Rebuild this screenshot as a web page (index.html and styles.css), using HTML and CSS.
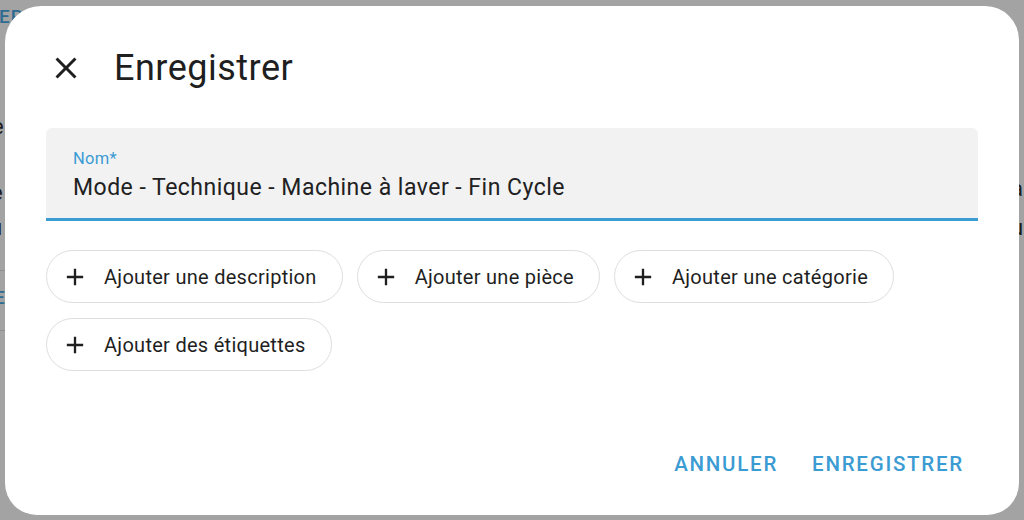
FILE: index.html
```html
<!DOCTYPE html>
<html lang="fr">
<head>
<meta charset="utf-8">
<title>Enregistrer</title>
<link rel="stylesheet" href="styles.css">
</head>
<body>
<div class="page">
  <div class="bg-left">
    <span class="bg-link">ER</span>
    <span class="bg-t t1">e</span>
    <span class="bg-t t2">e</span>
    <span class="bg-t t3">u</span>
    <span class="bg-line l1"></span>
    <span class="bg-link l2">E</span>
    <span class="bg-line l3"></span>
  </div>
  <div class="bg-right">
    <span class="bg-t r1">a</span>
    <span class="bg-t r2">u</span>
  </div>
</div>
<div class="dialog" role="dialog">
  <header class="head">
    <button class="close" aria-label="Fermer">
      <svg viewBox="0 0 24 24" width="36" height="36"><path d="M19,6.41L17.59,5L12,10.59L6.41,5L5,6.41L10.59,12L5,17.59L6.41,19L12,13.41L17.59,19L19,17.59L13.41,12L19,6.41Z"/></svg>
    </button>
    <h1 class="title">Enregistrer</h1>
  </header>
  <div class="field">
    <label class="field-label">Nom*</label>
    <div class="field-value">Mode - Technique - Machine à laver - Fin Cycle</div>
  </div>
  <div class="chips">
    <button class="chip"><svg viewBox="0 0 24 24" width="28" height="28"><path d="M19,13H13V19H11V13H5V11H11V5H13V11H19V13Z"/></svg><span>Ajouter une description</span></button>
    <button class="chip"><svg viewBox="0 0 24 24" width="28" height="28"><path d="M19,13H13V19H11V13H5V11H11V5H13V11H19V13Z"/></svg><span>Ajouter une pièce</span></button>
    <button class="chip"><svg viewBox="0 0 24 24" width="28" height="28"><path d="M19,13H13V19H11V13H5V11H11V5H13V11H19V13Z"/></svg><span>Ajouter une catégorie</span></button>
    <button class="chip"><svg viewBox="0 0 24 24" width="28" height="28"><path d="M19,13H13V19H11V13H5V11H11V5H13V11H19V13Z"/></svg><span>Ajouter des étiquettes</span></button>
  </div>
  <div class="actions">
    <button class="text-btn">Annuler</button>
    <button class="text-btn">Enregistrer</button>
  </div>
</div>
</body>
</html>
```
FILE: styles.css
```css
* { box-sizing: border-box; }
html, body { margin: 0; padding: 0; }
body {
  width: 1024px;
  height: 520px;
  overflow: hidden;
  background: #a3a3a3;
  font-family: Roboto, "Noto Sans", sans-serif;
  position: relative;
}
.page { position: absolute; inset: 0; }
.bg-left, .bg-right { position: absolute; top: 0; bottom: 0; }
.bg-left { left: 0; width: 30px; }
.bg-right { right: 0; width: 30px; }
.bg-link, .bg-t, .bg-line { position: absolute; }
.bg-link { color: #2c6b92; font-weight: 500; font-size: 19px; letter-spacing: 1px; }
.bg-left .bg-link { left: -1px; top: 5px; }
.bg-t { color: #1c1c1c; font-size: 22px; }
.t1 { left: -8px; top: 114px; }
.t2 { left: -9px; top: 180px; }
.t3 { left: -10px; top: 215px; }
.bg-line { left: 0; width: 30px; height: 1px; background: #8e8e8e; }
.l1 { top: 270px; }
.bg-left .l2 { left: -6px; top: 286px; }
.l3 { top: 330px; }
.r1 { left: 17px; top: 176px; }
.r2 { left: 17px; top: 215px; }

.dialog {
  position: absolute;
  left: 5px;
  top: 6px;
  width: 1014px;
  height: 509px;
  background: #fff;
  border-radius: 36px 34px 32px 32px;
  padding: 44px 41px 0;
  display: flex;
  flex-direction: column;
}
.head {
  display: flex;
  align-items: center;
  gap: 30px;
  height: 36px;
  margin-left: 2px;
}
.close {
  width: 36px; height: 36px;
  padding: 0; border: 0; background: none;
  display: flex;
}
.close svg { fill: #1f1f1f; }
.title {
  margin: 0;
  font-size: 36px;
  font-weight: 400;
  letter-spacing: 0.5px;
  color: #1f1f1f;
  line-height: 36px;
}
.field {
  margin-top: 42px;
  height: 93px;
  background: #f2f2f3;
  border-radius: 6px 6px 0 0;
  border-bottom: 3px solid #3b9bd3;
  padding: 21px 27px 0;
}
.field-label {
  display: block;
  color: #3b9bd3;
  font-size: 16.5px;
  letter-spacing: 0.3px;
  line-height: 20px;
}
.field-value {
  margin-top: 5px;
  color: #212121;
  font-size: 23px;
  letter-spacing: 0.48px;
  line-height: 28px;
}
.chips {
  margin-top: 29px;
  display: flex;
  flex-wrap: wrap;
  gap: 15px 14px;
}
.chip {
  height: 53px;
  border: 1.5px solid #dedede;
  border-radius: 27px;
  background: #fff;
  display: flex;
  align-items: center;
  gap: 15px;
  padding: 0 25px 0 14px;
  font-family: inherit;
  font-size: 20px;
  letter-spacing: 0.28px;
  color: #1f1f1f;
}
.chip svg { fill: #1f1f1f; flex: none; }
.actions {
  margin-top: auto;
  margin-bottom: 37px;
  display: flex;
  justify-content: flex-end;
  gap: 10px;
  margin-right: 2px;
}
.text-btn {
  border: 0;
  background: none;
  padding: 0 12px;
  height: 28px;
  font-family: inherit;
  font-size: 20.5px;
  font-weight: 500;
  letter-spacing: 1.75px;
  text-transform: uppercase;
  color: #3b9bd3;
}
```
